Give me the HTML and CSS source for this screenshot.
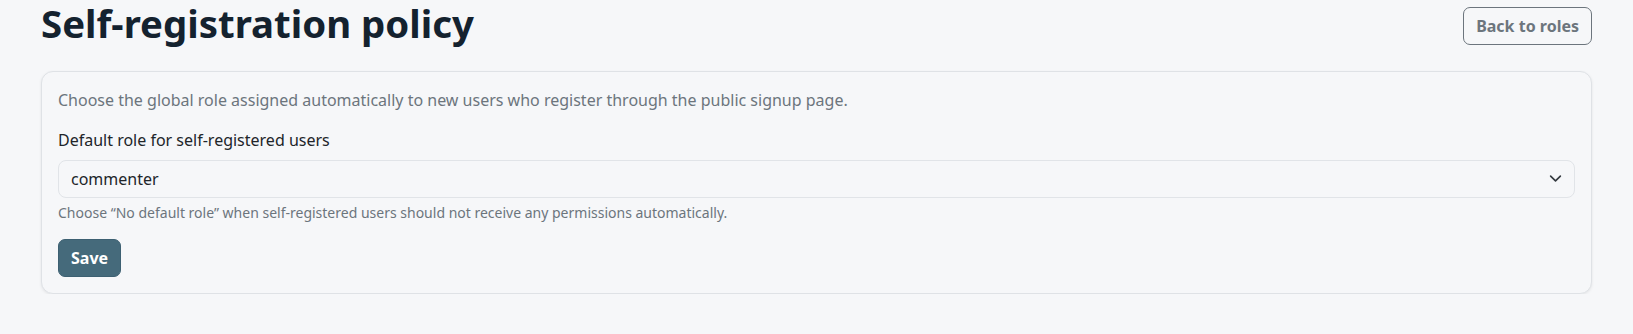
FILE: index.html
```html
<!DOCTYPE html>
<html lang="en">
<head>
  <meta charset="UTF-8">
  <meta name="viewport" content="width=device-width, initial-scale=1.0">
  <title>Self-registration policy</title>
  <link rel="stylesheet" href="styles.css">
</head>
<body>
  <div class="page">
    <div class="page-header">
      <h1 class="page-title">Self-registration policy</h1>
      <a href="#" class="btn btn-outline">Back to roles</a>
    </div>

    <div class="card">
      <p class="card-intro">Choose the global role assigned automatically to new users who register through the public signup page.</p>

      <form class="policy-form">
        <label for="defaultRole" class="form-label">Default role for self-registered users</label>
        <div class="select-wrap">
          <select id="defaultRole" class="form-select">
            <option value="">No default role</option>
            <option value="viewer">viewer</option>
            <option value="commenter" selected>commenter</option>
            <option value="editor">editor</option>
          </select>
          <svg class="select-chevron" width="16" height="16" viewBox="0 0 16 16" aria-hidden="true">
            <path d="M2 5l6 6 6-6" fill="none" stroke="#343a40" stroke-width="2" stroke-linecap="round" stroke-linejoin="round"/>
          </svg>
        </div>
        <div class="form-help">Choose “No default role” when self-registered users should not receive any permissions automatically.</div>

        <button type="submit" class="btn btn-primary">Save</button>
      </form>
    </div>
  </div>
</body>
</html>
```

FILE: styles.css
```css
body {
  margin: 0;
  font-family: "Noto Sans", "Open Sans", sans-serif;
  font-size: 16px;
  line-height: 1.5;
  color: #212529;
  background-color: #f6f7f9;
}

.page {
  padding: 0 41px;
}

.page-header {
  display: flex;
  justify-content: space-between;
  align-items: flex-start;
  margin-bottom: 25px;
}

.page-title {
  margin: 0;
  font-size: 38.4px;
  line-height: 1.2;
  font-weight: 700;
  color: #14222f;
}

.btn {
  display: inline-block;
  font-family: inherit;
  font-size: 16px;
  font-weight: 700;
  line-height: 1.5;
  padding: 6px 12px;
  border-radius: 7px;
  text-decoration: none;
  cursor: pointer;
}

.btn-outline {
  margin-top: 7px;
  color: #6c757d;
  border: 1px solid #6c757d;
  background: transparent;
}

.btn-primary {
  color: #fff;
  background-color: #456a7b;
  border: 1px solid #3d6072;
}

.card {
  background-color: #f6f7f9;
  border: 1px solid #dfe2e6;
  border-radius: 12px;
  padding: 16px;
  box-shadow: 0 1px 3px rgba(0, 0, 0, 0.08);
}

.card-intro {
  margin: 0 0 16px;
  color: #6c757d;
}

.form-label {
  display: block;
  margin-bottom: 8px;
  color: #212529;
}

.select-wrap {
  position: relative;
}

.form-select {
  display: block;
  width: 100%;
  box-sizing: border-box;
  height: 38px;
  padding: 6px 40px 6px 12px;
  font-family: inherit;
  font-size: 16px;
  color: #212529;
  background-color: #f6f7f9;
  border: 1px solid #e1e4e8;
  border-radius: 8px;
  appearance: none;
  outline: none;
}

.select-chevron {
  position: absolute;
  right: 13px;
  top: 12px;
  width: 13px;
  height: 13px;
  pointer-events: none;
}

.form-help {
  margin-top: 4px;
  font-size: 14px;
  color: #6c757d;
}

.policy-form .btn-primary {
  margin-top: 16px;
}
```
